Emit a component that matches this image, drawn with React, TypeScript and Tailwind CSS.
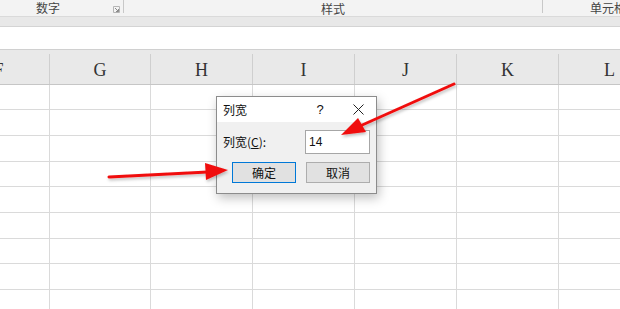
import React from 'react';

// F is mostly scrolled off the left edge, L runs past the right edge
const cols = [
    { label: 'F', w: 'w-[102px]' },
    { label: 'G', w: 'w-[101px]' },
    { label: 'H', w: 'w-[102px]' },
    { label: 'I', w: 'w-[102px]' },
    { label: 'J', w: 'w-[102px]' },
    { label: 'K', w: 'w-[102px]' },
    { label: 'L', w: 'w-[102px]' },
];

// row heights chosen so the lines land where the screenshot has them
const rowHeights = ['h-[25px]', 'h-[26px]', 'h-[26px]', 'h-[25px]', 'h-[26px]', 'h-[26px]', 'h-[25px]', 'h-[26px]', 'h-[26px]'];

const cjk = "font-['Noto_Sans_CJK_SC','Noto_Sans',sans-serif]";

const Arrows: React.FC = () => (
    <svg className="absolute inset-0 pointer-events-none" width="620" height="309" viewBox="0 0 620 309">
        <defs>
            <filter id="sh" x="-20%" y="-20%" width="140%" height="140%">
                <feDropShadow dx="1" dy="2" stdDeviation="1.5" floodColor="#000" floodOpacity="0.25" />
            </filter>
        </defs>
        <g filter="url(#sh)" fill="#f01010" stroke="#f01010" strokeLinecap="round">
            <line x1="454" y1="84" x2="360" y2="126" strokeWidth="3" />
            <polygon points="341,135 358,118 366,132" stroke="none" />
            <line x1="109" y1="177" x2="208" y2="172" strokeWidth="3" />
            <polygon points="228,170 205,163 206,180" stroke="none" />
        </g>
    </svg>
);

const Dialog: React.FC = () => (
    <div className={`absolute left-[216px] top-[96px] w-[161px] h-[98px] bg-[#f0f0f0] border border-[#8c8c8c] shadow-[2px_4px_10px_rgba(0,0,0,0.25)] ${cjk} text-[12px] text-[#111]`}>
        <div className="h-[25px] bg-white flex items-center pl-[6px]">
            <span>列宽</span>
            <span className="ml-auto w-[12px] text-center font-['Liberation_Sans',sans-serif] text-[13px]">?</span>
            <span className="ml-[26px] mr-[12px] w-[12px] flex items-center justify-center">
                <svg width="11" height="11" viewBox="0 0 11 11">
                    <path d="M0.5 0.5 L10.5 10.5 M10.5 0.5 L0.5 10.5" stroke="#222" strokeWidth="1" />
                </svg>
            </span>
        </div>
        <div className="flex items-center pl-[6px] pr-[6px] mt-[8px]">
            <span>列宽(<span className="underline">C</span>):</span>
            <div className="ml-auto w-[65px] h-[24px] bg-white border border-[#a6a6a6] flex items-center pl-[3px] font-['Liberation_Sans',sans-serif] text-[12px]">14</div>
        </div>
        <div className="flex pl-[15px] pr-[6px] mt-[8px] gap-[10px]">
            <div className="w-[64px] h-[21px] bg-[#e1e1e1] border border-[#0078d7] flex items-center justify-center">确定</div>
            <div className="w-[64px] h-[21px] bg-[#e1e1e1] border border-[#adadad] flex items-center justify-center">取消</div>
        </div>
    </div>
);

export default function App() {
    return (
        <div className="relative w-[620px] h-[309px] overflow-hidden bg-white">
            {/* ribbon group labels */}
            <div className={`h-[17px] bg-[#f3f3f3] border-b border-[#dadada] flex items-center text-[12px] text-[#444] ${cjk}`}>
                <div className="w-[123px] h-full relative flex items-center">
                    <span className="ml-[36px]">数字</span>
                    <svg className="absolute left-[113px] top-[6px]" width="7" height="7" viewBox="0 0 7 7">
                        <path d="M0.5 6.5 V0.5 H6.5 V6.5 Z" fill="none" stroke="#b5b5b5" />
                        <path d="M2 2 L5.5 5.5 M5.5 3 V5.5 H3" fill="none" stroke="#8a8a8a" />
                    </svg>
                </div>
                <div className="w-[420px] h-[13px] self-start border-x border-[#c8c8c8] flex items-center justify-center pt-[4px]">
                    <span>样式</span>
                </div>
                <div className="flex-1 pl-[47px] whitespace-nowrap overflow-hidden">单元格</div>
            </div>
            <div className="h-[10px] bg-[#e8e8e8] border-b border-[#d4d4d4]" />
            {/* formula bar */}
            <div className="h-[23px] bg-white border-b border-[#d0d0d0]" />
            {/* column headers */}
            <div className="h-[35px] bg-[#e9e9e9] border-b border-[#c6c6c6] flex flex-col">
                <div className="h-[8px]" />
                <div className="flex-1 flex -ml-[52px]">
                    {cols.map((c) => (
                        <div
                            key={c.label}
                            className={`${c.w} shrink-0 border-r border-[#cfcfcf] flex items-center justify-center pt-[3px] font-['Liberation_Serif',serif] text-[18px] text-[#333]`}
                        >
                            {c.label}
                        </div>
                    ))}
                </div>
            </div>
            {/* grid */}
            {rowHeights.map((h, i) => (
                <div key={i} className={`${h} flex -ml-[52px] border-b border-[#dadada]`}>
                    {cols.map((c) => (
                        <div key={c.label} className={`${c.w} shrink-0 border-r border-[#dadada]`} />
                    ))}
                </div>
            ))}
            <Dialog />
            <Arrows />
        </div>
    );
}
